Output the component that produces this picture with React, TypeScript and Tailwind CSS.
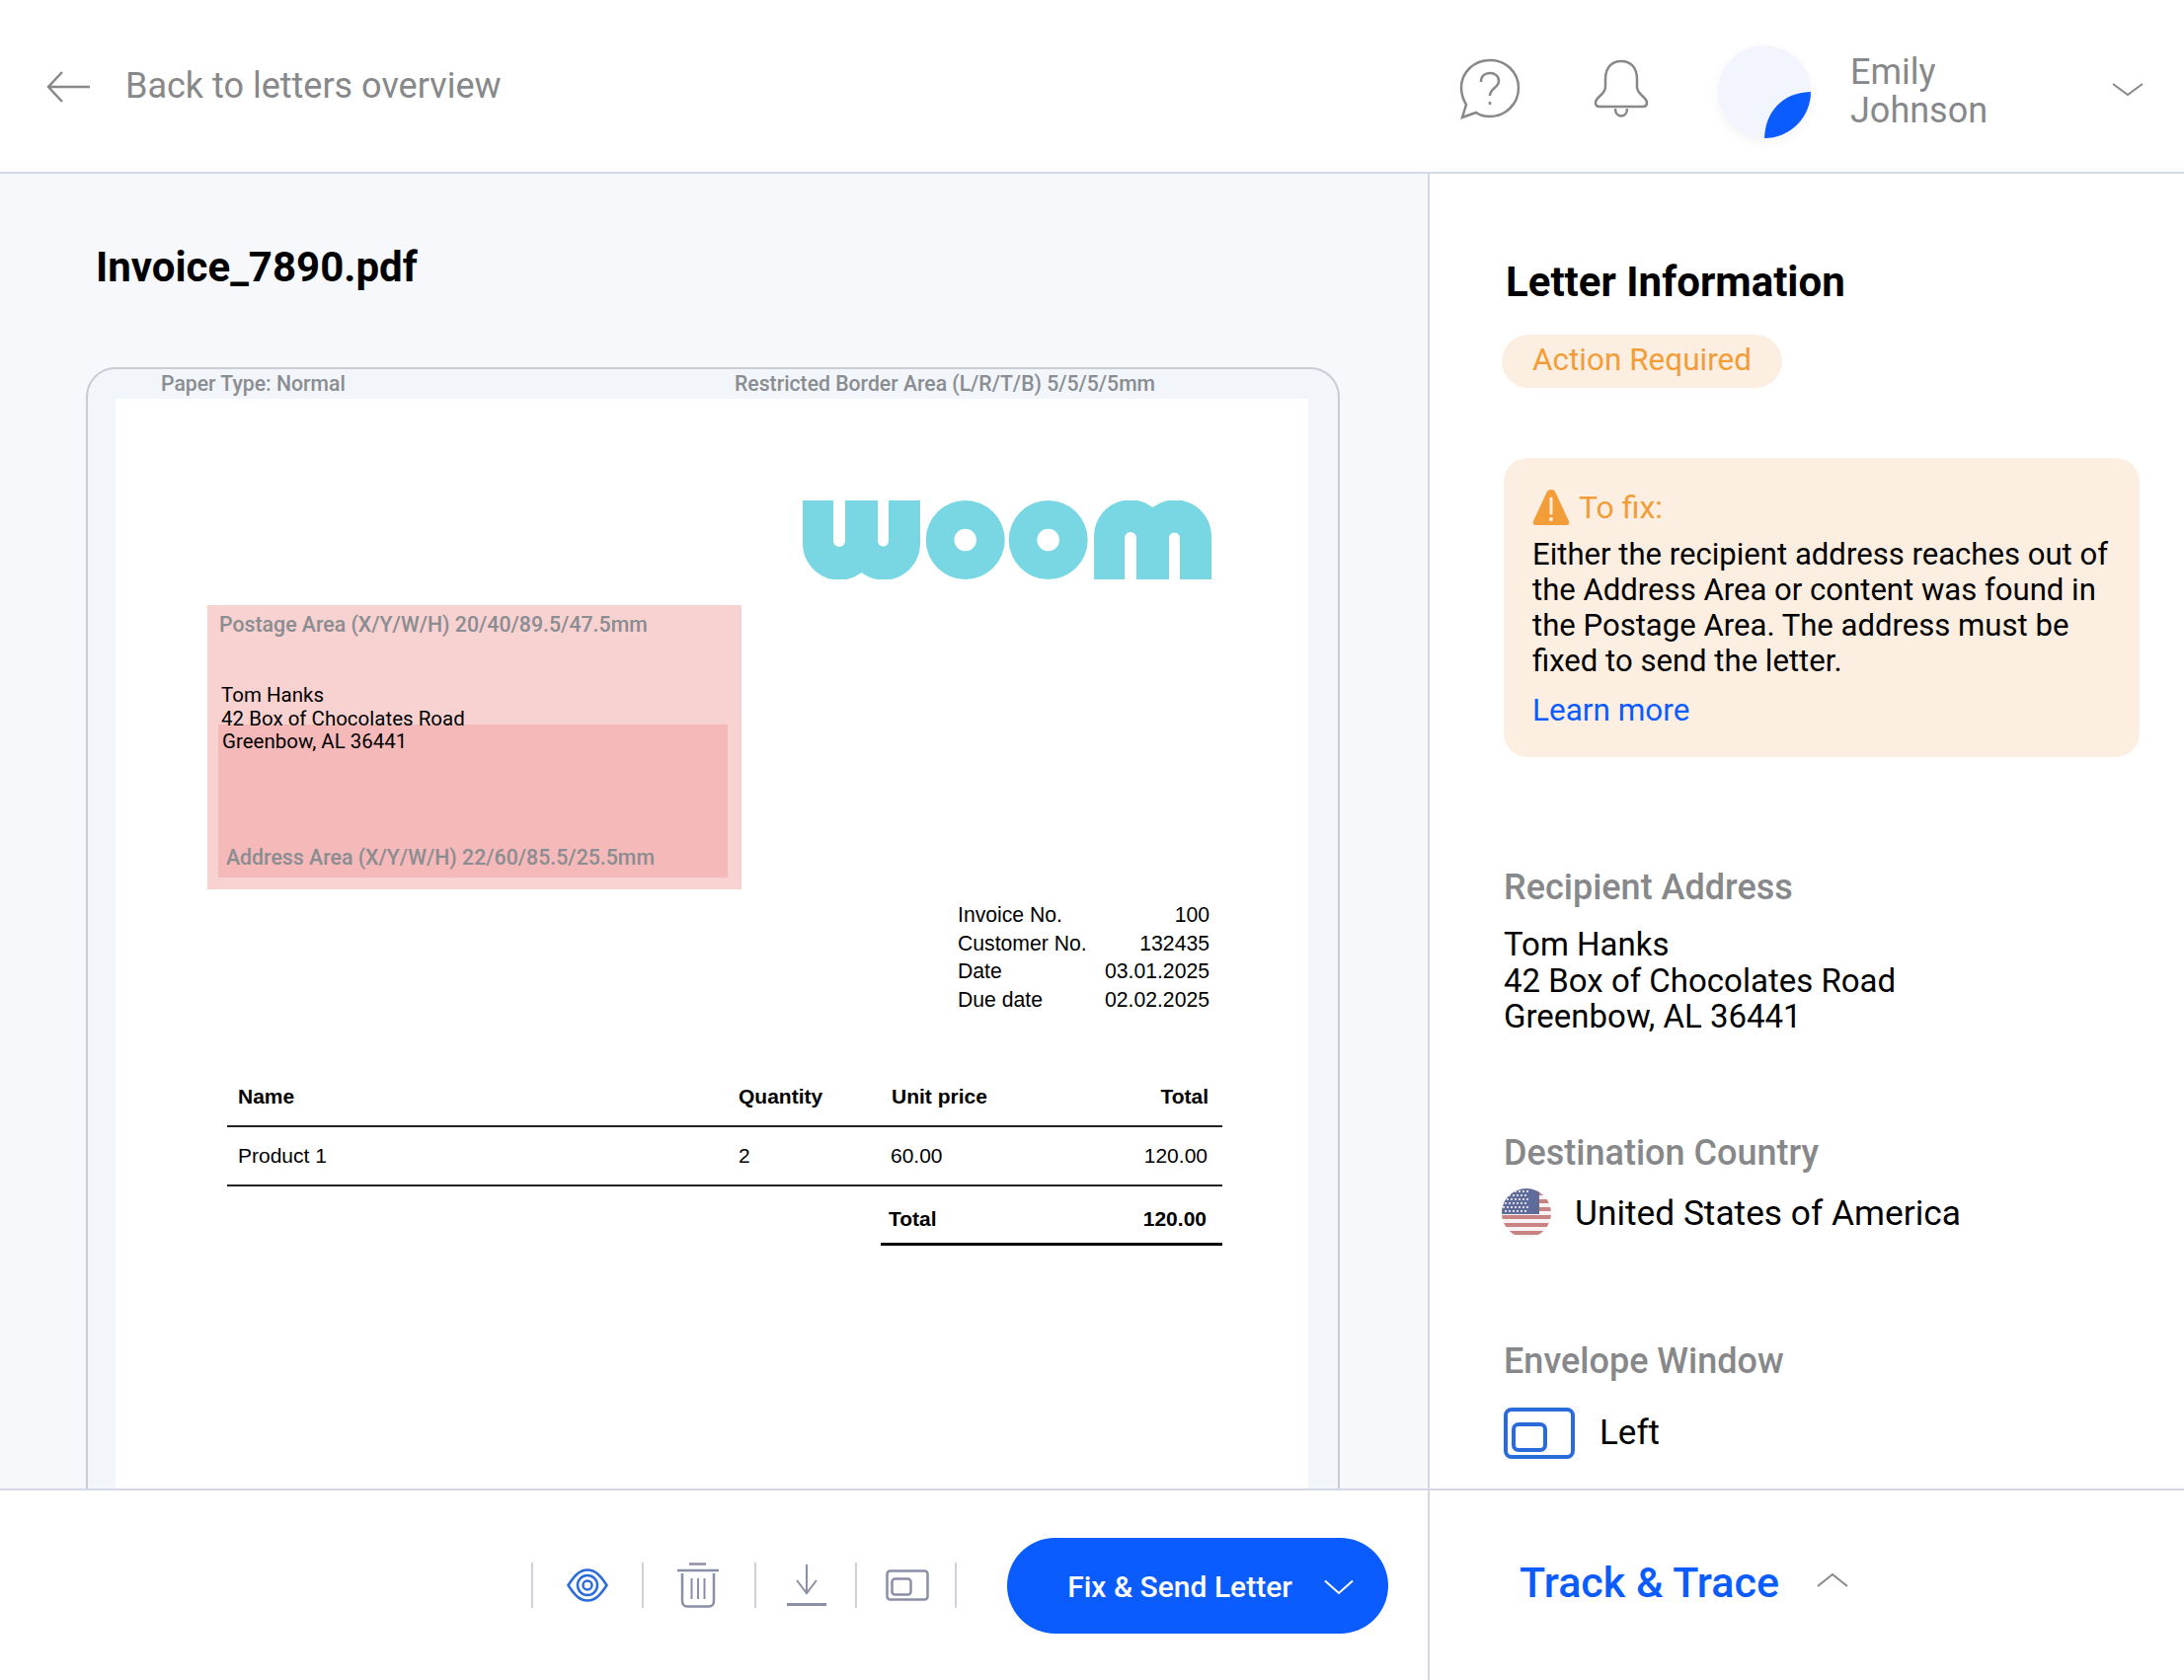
const rows = [
  ['Invoice No.', '100'],
  ['Customer No.', '132435'],
  ['Date', '03.01.2025'],
  ['Due date', '02.02.2025'],
]

function Separator() {
  return <div className="h-[46px] w-[2px] shrink-0 bg-[#ced1dd]" />
}

function WoomLogo() {
  return (
    <svg width="414" height="80" viewBox="0 0 414 80" fill="#79d7e4" className="block">
      <path d="M0 0H31V41a6 6 0 0 0 12 0V0H76V41a5.500 5.500 0 0 0 11 0V0H119V43A37 37 0 0 1 59.500 73A37 37 0 0 1 0 43Z" />
      <path fillRule="evenodd" d="M164.700 0a40 40 0 1 0 0 80a40 40 0 1 0 0-80ZM164.700 28.700a11.300 11.300 0 1 1 0 22.600a11.300 11.300 0 1 1 0-22.600Z" />
      <path fillRule="evenodd" d="M248.700 0a40 40 0 1 0 0 80a40 40 0 1 0 0-80ZM248.700 28.700a11.300 11.300 0 1 1 0 22.600a11.300 11.300 0 1 1 0-22.600Z" />
      <path d="M295 80V37A37 37 0 0 1 354.500 7A37 37 0 0 1 414 37V80H382V38a5.500 5.500 0 0 0-11 0V80H338V38a6 6 0 0 0-12 0V80Z" />
    </svg>
  )
}

function UsFlag() {
  const stripes = [3, 11, 19, 27, 35, 43]
  const stars: [number, number][] = []
  for (let y = 3; y < 24; y += 4) {
    for (let x = 2 + (y % 8 === 3 ? 0 : 2); x < 28; x += 4) stars.push([x, y])
  }
  return (
    <svg width="50" height="50" viewBox="0 0 50 50" className="shrink-0">
      <defs>
        <clipPath id="flag-clip">
          <circle cx="25" cy="25" r="25" />
        </clipPath>
      </defs>
      <g clipPath="url(#flag-clip)">
        <rect width="50" height="50" fill="#fbf3f3" />
        {stripes.map((y) => (
          <rect key={y} x="0" y={y} width="50" height="4" fill="#c98383" />
        ))}
        <rect width="38" height="26" fill="#5f6b98" />
        {stars.map(([x, y]) => (
          <circle key={`${x}-${y}`} cx={x} cy={y} r="1" fill="#fff" />
        ))}
      </g>
    </svg>
  )
}

export default function App() {
  return (
    <div className="flex h-[1702px] w-[2212px] flex-col overflow-hidden bg-white font-['Roboto',sans-serif]">
      {/* Cabecera */}
      <header className="flex h-[176px] shrink-0 items-center border-b-2 border-[#d5d9e5]">
        <svg width="46" height="34" viewBox="0 0 46 34" fill="none" stroke="#87888a" strokeWidth="2.500" className="ml-[47px] mt-[2px] shrink-0">
          <path d="M44 17H2M16 2L2 17L16 32" />
        </svg>
        <span className="ml-[34px] text-[36px] text-[#87888a]">Back to letters overview</span>

        <svg width="62" height="62" viewBox="0 0 62 62" fill="none" stroke="#87888a" strokeWidth="2.500" className="ml-auto mt-[6px] shrink-0">
          <path d="M31 2C47 2 60 14 60 30S47 59 31 59C26 59 21 58 17 55L3 60L7 47C4 42 2 36 2 30C2 14 15 2 31 2Z" />
          <path d="M22 24C22 18 26 15 31 15S40 18 40 23C40 30 31 30 31 38" />
          <path d="M31 44V47" />
        </svg>
        <svg width="56" height="60" viewBox="0 0 56 60" fill="none" stroke="#87888a" strokeWidth="2.500" className="ml-[74px] mt-[6px] shrink-0">
          <path d="M28 2C39 2 44 10 44 20V28C44 36 54 38 54 44C54 47 52 48 50 48H6C4 48 2 47 2 44C2 38 12 36 12 28V20C12 10 17 2 28 2Z" />
          <path d="M22 50C22 60 34 60 34 50" />
        </svg>
        <div className="relative ml-[70px] mt-[12px] h-[94px] w-[94px] shrink-0 rounded-full bg-[#f2f5fd] shadow-[0_4px_12px_rgba(0,0,0,0.05)]">
          <svg width="94" height="94" viewBox="0 0 94 94" className="absolute inset-0">
            <path d="M47 94C48 68 64 48 94 47A47 47 0 0 1 47 94Z" fill="#0a5cff" />
          </svg>
        </div>
        <div className="ml-[40px] mt-[11px] w-[238px] text-[36px] leading-[39px] text-[#87888a]">
          Emily
          <br />
          Johnson
        </div>
        <svg width="32" height="14" viewBox="0 0 32 14" fill="none" stroke="#87888a" strokeWidth="2" className="ml-[27px] mr-[41px] mt-[8px] shrink-0">
          <path d="M1 1L16 12L31 1" />
        </svg>
      </header>

      <div className="flex min-h-0 flex-1">
        {/* Columna izquierda */}
        <div className="flex w-[1446px] shrink-0 flex-col">
          <main className="min-h-0 flex-1 overflow-hidden bg-[#f6f8fc]">
            <h1 className="ml-[97px] mt-[69px] text-[42px] leading-[52px] font-bold text-black">Invoice_7890.pdf</h1>
            <div className="ml-[87px] mt-[75px] h-[1200px] w-[1270px] rounded-t-[30px] border-2 border-[#c9ccd3] bg-[#f2f5f9] pl-[28px] pr-[30px]">
              <div className="flex h-[30px] items-center text-[21.200px] font-medium text-[#8a8d91]">
                <span className="ml-[46px] w-[581px]">Paper Type: Normal</span>
                <span>Restricted Border Area (L/R/T/B) 5/5/5/5mm</span>
              </div>
              <div className="h-[1200px] bg-white">
                <div className="ml-[696px] pt-[103px]">
                  <WoomLogo />
                </div>
                <div className="ml-[93px] mt-[26px] h-[288px] w-[541px] bg-[#f8d1d1] pl-[12px] pt-[7px]">
                  <div className="text-[21.300px] leading-[26px] font-medium text-[#8a8d91]">Postage Area (X/Y/W/H) 20/40/89.5/47.5mm</div>
                  <div className="relative mt-[47px] text-[20.500px] leading-[23.500px] text-black">
                    <div className="relative z-10 ml-[2px]">
                      Tom Hanks
                      <br />
                      42 Box of Chocolates Road
                      <br />
                      <span className="ml-[1px]">Greenbow, AL 36441</span>
                    </div>
                  </div>
                  <div className="-mt-[30px] ml-[-1px] flex h-[155px] w-[516px] items-end bg-[#f5b9b9] pb-[7px] pl-[8px] text-[21.300px] leading-[26px] font-medium text-[#8a8d91]">
                    Address Area (X/Y/W/H) 22/60/85.5/25.5mm
                  </div>
                </div>
                <div className="mt-[12px] ml-[853px] w-[255px] font-['Liberation_Sans',sans-serif] text-[21.200px] leading-[28.700px] text-black">
                  {rows.map(([label, value]) => (
                    <div key={label} className="flex justify-between">
                      <span>{label}</span>
                      <span>{value}</span>
                    </div>
                  ))}
                </div>
                <div className="ml-[113px] mt-[67px] w-[1008px] font-['Liberation_Sans',sans-serif] text-[21px] text-black">
                  <div className="grid h-[47px] grid-cols-[507px_155px_1fr_auto] items-center border-b-2 border-[#222] pb-[14px] pl-[11px] pr-[14px] font-bold">
                    <span>Name</span>
                    <span>Quantity</span>
                    <span>Unit price</span>
                    <span>Total</span>
                  </div>
                  <div className="grid h-[60px] grid-cols-[507px_154px_1fr_auto] items-center border-b-2 border-[#222] pl-[11px] pr-[15px]">
                    <span>Product 1</span>
                    <span>2</span>
                    <span>60.00</span>
                    <span>120.00</span>
                  </div>
                  <div className="ml-[662px] flex h-[60px] items-center justify-between border-b-[3px] border-black pl-[8px] pr-[16px] pt-[8px] font-bold">
                    <span>Total</span>
                    <span>120.00</span>
                  </div>
                </div>
              </div>
            </div>
          </main>

          {/* Barra de acciones */}
          <div className="flex h-[194px] shrink-0 items-center justify-end border-t-2 border-[#d5d9e5] pr-[40px]">
            <Separator />
            <div className="flex w-[110px] items-center justify-center">
              <svg width="42" height="34" viewBox="0 0 42 34" fill="none" stroke="#2a6bdc" strokeWidth="2.500">
                <path d="M1.500 17C8 7 13 1.500 21 1.500S34 7 40.500 17C34 27 29 32.500 21 32.500S8 27 1.500 17Z" />
                <ellipse cx="21" cy="17" rx="10" ry="10" />
                <ellipse cx="21" cy="17" rx="4.500" ry="4.500" />
              </svg>
            </div>
            <Separator />
            <div className="flex w-[112px] items-center justify-center pr-[2px]">
              <svg width="44" height="46" viewBox="0 0 44 46" fill="none" stroke="#8a8fa8" strokeWidth="2.500">
                <path d="M13 1.500H30M1 8H43" />
                <path d="M6 11V39C6 42 8 44.500 11 44.500H33C36 44.500 38 42 38 39V11" />
                <path d="M15.500 16V37M22 16V37M28.500 16V37" strokeWidth="2" />
              </svg>
            </div>
            <Separator />
            <div className="flex w-[100px] items-center justify-center pl-[2px]">
              <svg width="42" height="42" viewBox="0 0 42 42" fill="none" stroke="#8a8fa8" strokeWidth="2">
                <path d="M21 0V28M11 16L21 29L31 16" />
                <path d="M1 40.500H41" strokeWidth="3" />
              </svg>
            </div>
            <Separator />
            <div className="flex w-[99px] items-center justify-center pl-[2px]">
              <svg width="44" height="32" viewBox="0 0 44 32" fill="none" stroke="#8a8fa8" strokeWidth="2.500">
                <rect x="1.500" y="1.500" width="41" height="29" rx="3" />
                <rect x="6.500" y="9.500" width="19" height="16" rx="3" />
              </svg>
            </div>
            <Separator />
            <button className="ml-[51px] flex h-[97px] w-[386px] items-center justify-center rounded-full bg-[#0a5cff] pl-[26px] pt-[3px] text-[30px] font-medium text-white">
              Fix &amp; Send Letter
              <svg width="30" height="16" viewBox="0 0 30 16" fill="none" stroke="#fff" strokeWidth="2" className="ml-[32px]">
                <path d="M1 1.500L15 14L29 1.500" />
              </svg>
            </button>
          </div>
        </div>

        {/* Columna derecha */}
        <aside className="flex min-w-0 flex-1 flex-col border-l-2 border-[#d5d9e5]">
          <div className="min-h-0 flex-1 overflow-hidden pl-[75px] pr-[43px]">
            <h2 className="ml-[2px] mt-[81px] text-[42px] leading-[58px] font-bold text-black">Letter Information</h2>
            <div className="ml-[-2px] mt-[24px] inline-block h-[54px] rounded-full bg-[#fdeee2] px-[31px] text-[31.500px] leading-[52px] text-[#f29d38]">
              Action Required
            </div>
            <div className="mt-[71px] h-[303px] w-[644px] rounded-[24px] bg-[#fdeee2] pl-[29px] pr-[20px] pt-[31px] text-[31.100px] leading-[36px] text-black">
              <div className="flex items-center text-[32px] text-[#f29d38]">
                <svg width="38" height="38" viewBox="0 0 38 38" className="shrink-0">
                  <path d="M19 1C22 1 23 3 24 5L37 33C38 36 36 37 34 37H4C2 37 0 36 1 33L14 5C15 3 16 1 19 1Z" fill="#f29d38" />
                  <path d="M19 10V25" stroke="#fdeee2" strokeWidth="3" strokeLinecap="round" />
                  <circle cx="19" cy="31" r="2" fill="#fdeee2" />
                </svg>
                <span className="ml-[9px]">To fix:</span>
              </div>
              <p className="mt-[11px]">
                Either the recipient address reaches out of the Address Area or content was found in the Postage Area. The address must be fixed to send the letter.
              </p>
              <div className="mt-[14px] text-[31.500px] text-[#0a5cff]">Learn more</div>
            </div>

            <div className="mt-[109px] text-[36px] leading-[46px] font-medium text-[#87888a]">Recipient Address</div>
            <div className="mt-[17px] text-[33px] leading-[36.500px] text-black">
              Tom Hanks
              <br />
              42 Box of Chocolates Road
              <br />
              Greenbow, AL 36441
            </div>
            <div className="mt-[96px] text-[36px] leading-[46px] font-medium text-[#87888a]">Destination Country</div>
            <div className="ml-[-2px] mt-[13px] flex items-center text-[35.300px] leading-[50px] text-black">
              <UsFlag />
              <span className="ml-[24px]">United States of America</span>
            </div>
            <div className="mt-[102px] text-[36px] leading-[46px] font-medium text-[#87888a]">Envelope Window</div>
            <div className="mt-[24px] flex items-center text-[35px] leading-[52px] text-black">
              <svg width="72" height="52" viewBox="0 0 72 52" fill="none" stroke="#2a6bdc" strokeWidth="4" className="shrink-0">
                <rect x="2" y="2" width="68" height="48" rx="6" />
                <rect x="10" y="17" width="32" height="26" rx="5" />
              </svg>
              <span className="ml-[25px]">Left</span>
            </div>
          </div>
          <div className="flex h-[194px] shrink-0 items-start border-t-2 border-[#d5d9e5] pl-[91px] pt-[63px]">
            <span className="text-[43px] leading-[60px] font-medium text-[#0a5cff]">Track &amp; Trace</span>
            <svg width="32" height="16" viewBox="0 0 32 16" fill="none" stroke="#87888a" strokeWidth="2" className="ml-[38px] mt-[20px]">
              <path d="M1 14L16 2L31 14" />
            </svg>
          </div>
        </aside>
      </div>
    </div>
  )
}
